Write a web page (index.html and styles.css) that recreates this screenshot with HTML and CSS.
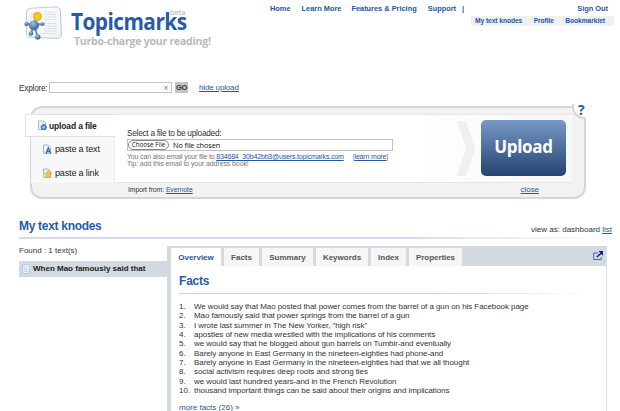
FILE: index.html
```html
<!DOCTYPE html>
<html lang="en">
<head>
<meta charset="utf-8">
<title>Topicmarks</title>
<link rel="stylesheet" href="styles.css">
</head>
<body>
<header class="header">
  <svg class="logo" width="42" height="38" viewBox="0 0 42 38">
    <defs>
      <linearGradient id="card" x1="0" y1="0" x2="1" y2="1"><stop offset="0" stop-color="#fff"/><stop offset="1" stop-color="#eef1f5"/></linearGradient>
      <radialGradient id="sun"><stop offset="0" stop-color="#ffd63c"/><stop offset="1" stop-color="#f5a916"/></radialGradient>
      <radialGradient id="ball" cx=".4" cy=".3"><stop offset="0" stop-color="#a5c0df"/><stop offset="1" stop-color="#4774ac"/></radialGradient>
    </defs>
    <path d="M8 2.200L32 .9Q37 .8 37.300 5L38.500 28Q38.500 32.200 34 32.500L8 31.200Q3 31 3.200 26L3.500 7Q3.700 2.500 8 2.200Z" fill="url(#card)" stroke="#b9cae0"/>
    <g stroke="#d6d8da" stroke-width="1.200" fill="none" stroke-dasharray="2 .8 3 .6">
      <path d="M8 8h5M7 11h5M7 14h5M21 6h11M21 8.500h12M22 11h11M21 13.500h12M22 17.500h11M22 20h12M21 22.500h12M22 25h12M17 27.500h15"/>
    </g>
    <g stroke="#6288b7" stroke-width="1.800">
      <path d="M11 19L14 10M11 19L3.500 18M11 19L19.500 18M11 19L8 27.500M11 19L14.800 31"/>
    </g>
    <g fill="url(#ball)">
      <circle cx="11" cy="19.500" r="5"/><circle cx="3.500" cy="18" r="2.200"/><circle cx="19.500" cy="18" r="2.100"/><circle cx="8" cy="27.500" r="2.300"/><circle cx="14.800" cy="31" r="2.700"/>
    </g>
    <circle cx="14.500" cy="10.500" r="4.500" fill="url(#sun)"/>
  </svg>
  <div class="brand">
    <div class="name"><span class="word">Topicmarks</span><span class="beta">beta</span></div>
    <div class="tagline">Turbo-charge your reading!</div>
  </div>
  <nav class="nav">
    <div class="main-nav"><a class="home">Home</a><a class="learn">Learn More</a><a class="features">Features &amp; Pricing</a><a class="support">Support</a><span class="bar">|</span><a class="signout">Sign Out</a></div>
    <div class="sub-nav"><a>My text knodes</a><a>Profile</a><a>Bookmarklet</a></div>
  </nav>
</header>

<section class="explore">
  <span class="label">Explore:</span>
  <span class="search">x</span>
  <span class="go">GO</span>
  <a class="link">hide upload</a>
</section>

<section class="upload">
  <div class="tabs">
    <div class="tab active">
      <svg width="9" height="11" viewBox="0 0 9 11"><path d="M.5 1h5l2 2v6.500h-7z" fill="#e8f1fc" stroke="#9cbbe0"/><path d="M5.500 3.500L9 6.500 8 10H3.500L2.500 6.500Z" fill="#4d7cb7"/><circle cx="5.700" cy="7.200" r="1.300" fill="#a8c6ea"/></svg>
      <span>upload a file</span>
    </div>
    <div class="tab">
      <svg width="9" height="11" viewBox="0 0 9 11"><path d="M.5 1h5l2 2v6.500h-7z" fill="#e8f1fc" stroke="#9cbbe0"/><path d="M3 9.500L5.300 4 7.800 9.500M4 7.700h3" fill="none" stroke="#386aa8" stroke-width="1.300"/></svg>
      <span>paste a text</span>
    </div>
    <div class="tab">
      <svg width="9" height="11" viewBox="0 0 9 11"><path d="M.5 1h5l2 2v6.500h-7z" fill="#e8f1fc" stroke="#9cbbe0"/><path d="M5.200 2.400l1.200 2.500 2.600.3-1.900 1.900.5 2.800-2.400-1.300L2.800 9.900l.4-2.800-1.900-1.900 2.700-.3z" fill="#ffc331" stroke="#f29a1d" stroke-width=".6"/></svg>
      <span>paste a link</span>
    </div>
  </div>
  <div class="pane">
    <div class="form">
      <div class="select-label">Select a file to be uploaded:</div>
      <div class="file"><span class="choose">Choose File</span><span class="nofile">No file chosen</span></div>
      <div class="hint"><span class="hint-mail">You can also email your file to <a>834684_30b42bb3@users.topicmarks.com</a></span><span class="more">[<a>learn more</a>]</span></div>
      <div class="hint tip">Tip: add this email to your address book!</div>
    </div>
    <svg class="chevron" width="19" height="55" viewBox="0 0 19 55"><path d="M0 0h9l9 27.500-9 27.500H0l9-27.500z" fill="#f0f0f0"/></svg>
    <div class="button">Upload</div>
  </div>
  <div class="foot"><span class="import">Import from: <a>Evernote</a></span><a class="close">close</a></div>
  <div class="help">?</div>
</section>

<section class="title-row">
  <h1>My text knodes</h1>
  <div class="view">view as: dashboard <a>list</a></div>
</section>

<main class="content">
  <aside class="side">
    <div class="found">Found : 1 text(s)</div>
    <div class="item">
      <svg width="8" height="10" viewBox="0 0 8 10"><path d="M.5.500h5l2 2v7h-7z" fill="#e3effc" stroke="#b2cae6"/><path d="M2 3.500h3M2 5.500h4M2 7.500h4" stroke="#b5cfec" stroke-width=".8"/></svg>
      <span>When Mao famously said that</span>
    </div>
  </aside>
  <div class="knode">
    <div class="knode-tabs">
      <div class="kt overview">Overview</div><div class="kt facts">Facts</div><div class="kt summary">Summary</div><div class="kt keywords">Keywords</div><div class="kt index">Index</div><div class="kt properties">Properties</div>
      <svg class="popout" width="11" height="10" viewBox="0 0 11 10"><path d="M5 2H.7v6.500h7.600V6" fill="none" stroke="#5868a8"/><path d="M3.800 6L8.500 2" stroke="#101c85" stroke-width="1.500"/><path d="M5.500 0H10v4.800z" fill="#101c85"/></svg>
    </div>
    <div class="body">
      <h2>Facts</h2>
      <ol>
        <li><b>1.</b><span>We would say that Mao posted that power comes from the barrel of a gun on his Facebook page</span></li>
        <li><b>2.</b><span>Mao famously said that power springs from the barrel of a gun</span></li>
        <li><b>3.</b><span>I wrote last summer in The New Yorker, "high risk"</span></li>
        <li><b>4.</b><span>apostles of new media wrestled with the implications of his comments</span></li>
        <li><b>5.</b><span>we would say that he blogged about gun barrels on Tumblr-and eventually</span></li>
        <li><b>6.</b><span>Barely anyone in East Germany in the nineteen-eighties had phone-and</span></li>
        <li><b>7.</b><span>Barely anyone in East Germany in the nineteen-eighties had that we all thought</span></li>
        <li><b>8.</b><span>social activism requires deep roots and strong ties</span></li>
        <li><b>9.</b><span>we would last hundred years-and in the French Revolution</span></li>
        <li><b>10.</b><span>thousand important things can be said about their origins and implications</span></li>
      </ol>
      <div class="more-facts">more facts (26) »</div>
    </div>
  </div>
</main>
</body>
</html>
```
FILE: styles.css
```css
* { box-sizing: border-box; }
html, body { height: 411px; overflow: hidden; }
body {
  margin: 0;
  background: #fff;
  color: #333;
  font: 8px/10px "Liberation Sans", Arial, sans-serif;
  white-space: nowrap;
}
a { color: #2458a0; }
h1, h2 { margin: 0; font-size: 12px; color: #275ba6; }

.header { display: flex; height: 82px; padding-left: 23px; }
.logo { margin-top: 6px; flex: none; }
.brand { width: 180px; margin-left: 6px; padding-top: 8px; }
.name { position: relative; height: 27px; color: #275ba6; }
.word {
  display: inline-block;
  font: 700 23px/27px "Open Sans", sans-serif;
  letter-spacing: -0.6px;
  transform: scaleX(0.905);
  transform-origin: 0 50%;
}
.beta {
  position: absolute;
  left: 99px;
  top: 1px;
  font: 7px/8px "DejaVu Sans", sans-serif;
  letter-spacing: -0.1px;
  color: #b2b2b2;
}
.tagline {
  padding-left: 3px;
  font: 700 10.5px/12px "Open Sans", sans-serif;
  letter-spacing: -0.22px;
  color: #b9b9b9;
}
.nav { flex: 1; font-weight: 700; color: #2458a0; }
.main-nav { display: flex; padding: 4px 12px 0 19px; font-size: 7.4px; }
.learn { margin-left: 11px; }
.features { margin-left: 10px; }
.support { margin-left: 11px; }
.bar { margin-left: 6px; }
.signout { margin-left: auto; }
.sub-nav {
  display: flex;
  justify-content: space-between;
  width: 143px;
  margin: 2px 6px 0 auto;
  padding: 0 9px 0 4px;
  font-size: 6.7px;
  letter-spacing: -0.08px;
  background: #f0f0f0;
}

.explore { display: flex; height: 24px; padding-left: 19px; line-height: 11px; }
.explore .label { width: 30px; padding-top: 1px; font-size: 8.2px; letter-spacing: -0.2px; }
.search {
  width: 123px;
  height: 11px;
  padding-right: 3px;
  text-align: right;
  line-height: 10px;
  border: 1px solid #c4c4c4;
  color: #777;
}
.go {
  width: 13px;
  height: 11px;
  margin-left: 3px;
  background: #c3c3c3;
  text-align: center;
  font-size: 7.5px;
  font-weight: 700;
  letter-spacing: -0.4px;
}
.link { margin-left: 11px; text-decoration: underline; letter-spacing: -0.15px; }

.upload {
  position: relative;
  display: grid;
  grid-template: 69px 14px / 83px 1fr;
  width: 556px;
  height: 93px;
  margin-left: 30px;
  padding: 6px 12px 0 0;
  border: 2px solid #d6d6d6;
  border-radius: 12px;
  background: #f2f2f2;
}
.tabs { margin-left: -1px; background: #f8f8f8; border-right: 1px solid #ededed; }
.tab { display: flex; align-items: center; height: 24px; padding-left: 12px; font-size: 9px; letter-spacing: -0.15px; color: #222; }
.tab svg { flex: none; margin-right: 3px; }
.tab.active {
  height: 23px;
  width: 90px;
  margin-left: -6px;
  background: #fff;
  border: 1px solid #e2e2e2;
  border-right: 0;
  font-weight: 700;
  font-size: 8.5px;
}
.tab.active svg { margin-right: 2px; }
.pane { display: flex; background: linear-gradient(90deg, #fff 65%, #f7f7f7); border-top: 1px solid #e6e6e6; border-bottom: 1px solid #e6e6e6; }
.form { width: 342px; padding: 13px 0 0 12px; }
.select-label { font-size: 8.3px; letter-spacing: -0.28px; }
.file { display: flex; width: 266px; height: 12px; margin-top: 1px; border: 1px solid #c0c0c0; }
.choose {
  width: 41px;
  height: 10px;
  border: 1px solid #888;
  border-radius: 5px;
  text-align: center;
  font: 6.3px/8px "Open Sans", sans-serif;
  color: #111;
}
.nofile { margin-left: 4px; font: 7.4px/10px "Open Sans", sans-serif; letter-spacing: -0.13px; color: #111; }
.hint { display: flex; font-size: 7px; line-height: 7px; letter-spacing: -0.17px; color: #777; padding-top: 2px; }
.hint a, .view a, .close, .import a { text-decoration: underline; }
.tip { padding-top: 0; letter-spacing: -0.1px; }
.more { margin-left: 9px; }
.chevron { margin-top: 6px; }
.button {
  width: 85px;
  height: 56px;
  margin: 5px 0 0 5px;
  border-radius: 5px;
  background: linear-gradient(#7899c6, #22446f);
  color: #fff;
  text-align: center;
  font: 700 17px/54px "Open Sans", sans-serif;
  letter-spacing: -0.3px;
}
.foot { grid-column: 2; display: flex; padding: 2px 33px 0 13px; font-size: 6.8px; letter-spacing: -0.05px; }
.close { margin-left: auto; font-size: 8px; }
.help {
  position: absolute;
  right: -2px;
  top: -4px;
  width: 14px;
  height: 15px;
  border: solid #d6d6d6;
  border-width: 0 0 2px 2px;
  border-bottom-left-radius: 12px;
  background: #fff;
  color: #275ba6;
  font: 700 14px/12px "Open Sans", sans-serif;
  padding-left: 4px;
}

.title-row {
  display: flex;
  justify-content: space-between;
  height: 41px;
  padding: 20px 8px 0 19px;
  background: linear-gradient(90deg, #d3dae8 65%, #fff) 19px 38px / 588px 2px no-repeat;
}
.title-row h1 { line-height: 15px; letter-spacing: -0.3px; }
.view { padding-top: 6px; }

.content { display: flex; height: 165px; margin: 6px 13px 0 19px; }
.side { width: 148px; }
.found { height: 15px; }
.item {
  display: flex;
  align-items: center;
  height: 16px;
  padding-left: 3px;
  background: #d2d9e1;
  font-weight: 700;
  color: #222;
}
.item svg { margin-right: 3px; }
.knode { width: 440px; border-left: 4px solid #d2d9e1; border-right: 1px solid #d8e0ea; }
.knode-tabs { display: flex; height: 20px; padding-top: 2px; background: #d2d9e1; }
.kt {
  margin-right: 3px;
  background: #f6f6f6;
  text-align: center;
  line-height: 19px;
  font-weight: 700;
  color: #555;
}
.kt.overview { width: 50px; background: #fff; color: #2458a0; }
.facts { width: 35px; }
.summary { width: 51px; }
.keywords { width: 52px; }
.index { width: 35px; }
.properties { width: 53px; letter-spacing: -0.05px; }
.popout { margin: 3px 2px 0 auto; }
.body { padding-left: 8px; }
.body h2 {
  height: 28px;
  padding-top: 8px;
  line-height: 15px;
  letter-spacing: -0.2px;
  background: linear-gradient(90deg, #c7d1df 60%, #fff) 0 27px / 410px 1px no-repeat;
}
ol { list-style: none; margin: 8px 0 0; padding: 0; }
li { display: flex; height: 9.330px; line-height: 9.330px; letter-spacing: -0.07px; }
li b { width: 15px; font-weight: 400; }
.more-facts { margin-top: 8px; color: #2458a0; }
```
